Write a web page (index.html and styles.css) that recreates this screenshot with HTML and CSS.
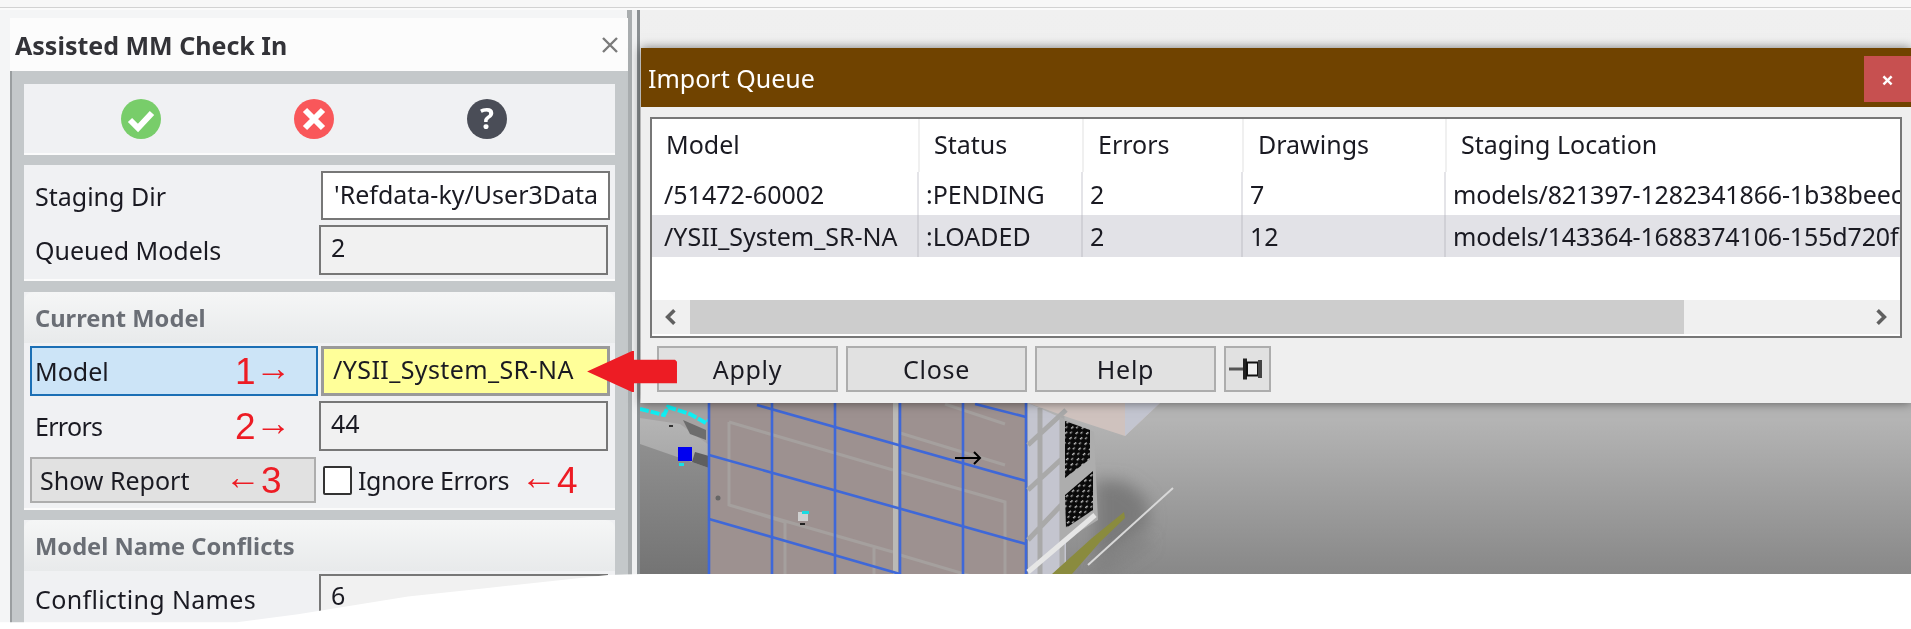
FILE: index.html
```html
<!DOCTYPE html>
<html lang="en">
<head>
<meta charset="utf-8">
<title>Assisted MM Check In</title>
<link rel="stylesheet" href="styles.css">
</head>
<body>
<div class="screen">
  <div class="topbar"></div>
  <div class="workspace">
    <aside class="panel">
      <div class="panel-inner">
        <header class="panel-title">
          <span>Assisted MM Check In</span>
          <svg class="panel-close" viewBox="0 0 20 20"><path d="M3 3 17 17M17 3 3 17"/></svg>
        </header>
        <div class="panel-body">
          <div class="group toolbar">
            <svg class="round-icon" viewBox="0 0 40 40"><circle cx="20" cy="20" r="20" fill="#78cd6a"/><path d="M9 21l8 8 14-15" fill="none" stroke="#fff" stroke-width="6"/></svg>
            <svg class="round-icon" viewBox="0 0 40 40"><circle cx="20" cy="20" r="20" fill="#f9575a"/><path d="M11 11 29 29M29 11 11 29" fill="none" stroke="#fff" stroke-width="6"/></svg>
            <svg class="round-icon" viewBox="0 0 40 40"><circle cx="20" cy="20" r="20" fill="#4a4d57"/><text x="20" y="30" class="help-glyph">?</text></svg>
          </div>
          <section class="group fields">
            <div class="row">
              <div class="label">Staging Dir</div>
              <div class="field field-edit">'Refdata-ky/User3Data</div>
            </div>
            <div class="row row-gap">
              <div class="label">Queued Models</div>
              <div class="field field-read">2</div>
            </div>
          </section>
          <section class="group">
            <h2 class="group-head">Current Model</h2>
            <div class="group-rows">
              <div class="row row-first">
                <div class="label label-focus">Model<span class="mark mark-1"><b>1</b><i>→</i></span></div>
                <div class="field field-hot">/YSII_System_SR-NA</div>
              </div>
              <div class="row row-gap">
                <div class="label label-tight">Errors<span class="mark mark-2"><b>2</b><i>→</i></span></div>
                <div class="field field-read">44</div>
              </div>
              <div class="row row-actions">
                <button class="report">Show Report<span class="mark mark-3"><i>←</i><b>3</b></span></button>
                <label class="check"><span class="box"></span><span>Ignore Errors</span><span class="mark mark-4"><i>←</i><b>4</b></span></label>
              </div>
            </div>
          </section>
          <section class="group">
            <h2 class="group-head">Model Name Conflicts</h2>
            <div class="group-rows">
              <div class="row">
                <div class="label label-wide">Conflicting Names</div>
                <div class="field field-read">6</div>
              </div>
            </div>
          </section>
        </div>
      </div>
    </aside>

    <main class="viewport">
      <svg class="model" viewBox="640 403 1271 171" preserveAspectRatio="none">
        <defs>
          <linearGradient id="lowGrey" x1="0" y1="0" x2="0" y2="1"><stop offset="0" stop-color="#8f8f8f"/><stop offset="1" stop-color="#747474"/></linearGradient>
          <pattern id="speck" width="8" height="7" patternUnits="userSpaceOnUse" patternTransform="rotate(-40)">
            <rect width="8" height="7" fill="#0a0a0a"/><rect x="1" y="1" width="3" height="1.4" fill="#c4c4c4"/><rect x="5" y="4" width="2.5" height="1.4" fill="#a8a8a8"/>
          </pattern>
          <filter id="soft" x="-50%" y="-50%" width="200%" height="200%"><feGaussianBlur stdDeviation="8"/></filter>
        </defs>
        <!-- ground and shadows -->
        <polygon points="640,444 709,468 709,574 640,574" fill="url(#lowGrey)"/>
        <polygon points="1095,480 1125,482 1146,498 1150,525 1125,545 1095,565" fill="#7a7a7a" filter="url(#soft)"/>
        <path d="M1095 574 1148 540" stroke="#7c7c7c" stroke-width="8" filter="url(#soft)"/>
        <!-- left debris -->
        <polygon points="640,403 709,403 709,445 680,424 640,418" fill="#a5a3a3"/>
        <polygon points="683,420 706,430 706,440 690,434" fill="#6d6d6d"/>
        <polygon points="695,452 709,456 709,468 692,462" fill="#5f5f5f"/>
        <polyline points="640,409 664,415 668,407 690,414 706,423 722,409" fill="none" stroke="#0ff0f4" stroke-width="4" stroke-dasharray="9 2"/>
        <rect x="669" y="425" width="4" height="2" fill="#333"/>
        <rect x="678" y="447" width="14" height="14" fill="#0000f0"/>
        <rect x="679" y="463" width="5" height="3" fill="#18e0e8"/>
        <!-- wall -->
        <rect x="709" y="403" width="317" height="171" fill="#9d9190"/>
        <g class="wall-trim">
          <path d="M729 422V505L785 522V574M729 422 893 470M729 505 893 552M900 472 1005 502V574M900 433 1005 465M900 555 1005 586M945 404 1005 424M874 548V574"/>
        </g>
        <rect x="893" y="403" width="5" height="171" fill="#bbbab6"/>
        <g class="wall-grid">
          <path d="M709 403V574M772 403V574M835 403V574M900 403V574M963 403V574M1026 403V574"/>
          <path d="M709 455 1026 544M709 519 900 574M757 405 1026 481M975 404 1026 417"/>
        </g>
        <circle cx="718" cy="498" r="2.5" fill="#666"/>
        <rect x="798" y="512" width="10" height="9" fill="#cfcfcf"/>
        <rect x="802" y="511" width="7" height="3" fill="#19dbe2"/>
        <rect x="800" y="523" width="5" height="2" fill="#222"/>
        <path class="small-arrow" d="M955 458H979M974 452 980 458 974 464"/>
        <!-- right-hand structure -->
        <polygon points="1028,403 1160,403 1125,436 1070,418" fill="#cfc2be"/>
        <polygon points="1125,403 1160,403 1125,436" fill="#c3c5d0"/>
        <polygon points="1028,403 1066,420 1066,574 1028,574" fill="#c4c5cf"/>
        <path d="M1028 445 1066 410M1028 490 1066 455M1028 540 1066 500M1040 408V574M1062 416V574" fill="none" stroke="#a9a9a9" stroke-width="5"/>
        <polygon points="1060,417 1094,432 1098,520 1066,540 1060,540" fill="#adadad"/>
        <polygon points="1065,421 1090,430 1090,459 1065,478" fill="url(#speck)"/>
        <polygon points="1065,495 1093,471 1093,510 1066,528" fill="url(#speck)"/>
        <path d="M1028 572 1095 515" stroke="#e6e6e6" stroke-width="5"/>
        <polygon points="1052,574 1072,574 1100,542 1125,518 1124,512 1092,538" fill="#8a8b3e"/>
        <path d="M1088 565 1173 488" stroke="#d8d8d8" stroke-width="2"/>
      </svg>

      <section class="dialog">
        <header class="dialog-title">
          <span>Import Queue</span>
          <button class="dialog-close">×</button>
        </header>
        <div class="list">
          <div class="list-row list-head">
            <div>Model</div><div>Status</div><div>Errors</div><div>Drawings</div><div>Staging Location</div>
          </div>
          <div class="list-row list-item">
            <div>/51472-60002</div><div>:PENDING</div><div>2</div><div>7</div><div>models/821397-1282341866-1b38beecd</div>
          </div>
          <div class="list-row list-item list-selected">
            <div>/YSII_System_SR-NA</div><div>:LOADED</div><div>2</div><div>12</div><div>models/143364-1688374106-155d720fd</div>
          </div>
          <div class="list-fill"></div>
          <div class="scrollbar">
            <div class="scroll-btn"><svg viewBox="0 0 16 16"><path d="M11 2 5 8l6 6"/></svg></div>
            <div class="scroll-thumb"></div>
            <div class="scroll-rest"></div>
            <div class="scroll-btn"><svg viewBox="0 0 16 16"><path d="M5 2l6 6-6 6"/></svg></div>
          </div>
        </div>
        <div class="dialog-actions">
          <button class="dlg-btn">Apply</button>
          <button class="dlg-btn">Close</button>
          <button class="dlg-btn">Help</button>
          <button class="dlg-btn pin">
            <svg viewBox="0 0 38 24"><path d="M0 12H15" stroke="#555" stroke-width="3"/><rect x="14" y="1.5" width="4" height="21" fill="#222"/><rect x="18" y="5.5" width="11" height="13" fill="#eee" stroke="#111" stroke-width="2"/><rect x="29" y="3" width="4" height="18" fill="#444"/></svg>
          </button>
        </div>
      </section>
    </main>
  </div>

  <svg class="red-arrow" viewBox="0 0 94 44"><polygon points="0,21 46,0 48,0 48,9 90,9 92,11 92,33 48,33 48,42 46,42"/></svg>
  <svg class="torn" viewBox="0 0 641 56" preserveAspectRatio="none"><polygon points="641,0 608,1 490,14 408,23 298,41 237,49 0,49 0,56 641,56"/></svg>
</div>
</body>
</html>
```
FILE: styles.css
```css
* { box-sizing: border-box; }
html, body { margin: 0; height: 100%; background: #fff; overflow: hidden; }
body { font-family: "Noto Sans", "Open Sans", sans-serif; color: #1a1a22; }

.screen { position: relative; width: 1911px; height: 629px; filter: blur(0.45px); overflow: hidden; }
.topbar { height: 10px; background: #f7f7f7; box-shadow: inset 0 -2px 0 #fafafa, inset 0 -3px 0 #d2d2d2; }
.workspace { display: flex; align-items: flex-start; }

/* left panel */
.panel { flex: none; width: 640px; height: 619px; padding: 8px 2px 0 10px; background: linear-gradient(90deg, #f4f5f6 0, #f4f5f6 627px, #a9adaf 627px, #a9adaf 632px, #eff0f1 632px, #eff0f1 637px, #8a8f92 637px); }
.panel-inner { width: 618px; }
.panel-title { height: 53px; padding: 0 8px 0 5px; background: #fcfcfc; display: flex; align-items: center; justify-content: space-between; font-size: 25px; font-weight: 700; color: #333338; }
.panel-close { width: 20px; height: 20px; fill: none; stroke: #7b7b7b; stroke-width: 2.4; }
.panel-body { background: #c4c8ca; border-left: 2px solid #9a9ea0; padding: 13px 13px 0 12px; display: flex; flex-direction: column; gap: 12px; }
.group { background: #f0f1f3; box-shadow: 0 2px 0 #fbfbfb; }
.toolbar { height: 69px; display: flex; align-items: center; gap: 133px; padding-left: 97px; }
.round-icon { width: 40px; height: 40px; }
.help-glyph { font: 700 29px "Noto Sans", sans-serif; fill: #fff; text-anchor: middle; }

.fields { height: 114px; padding: 6px 5px 0 6px; margin-bottom: 1px; }
.group-head { margin: 0; height: 51px; padding: 0 0 0 11px; display: flex; align-items: center; font-size: 23.7px; font-weight: 700; color: #6a6e75; background: linear-gradient(#f5f6f6, #e8eaeb); border-radius: 9px 9px 0 0; }
.group-rows { padding: 3px 5px 5px 6px; display: flex; flex-direction: column; }
.row { display: flex; align-items: stretch; height: 49px; font-size: 25px; }
.row-gap { margin-top: 5px; height: 50px; }
.row-first { height: 50px; }
.row-actions { margin-top: 6px; height: 46px; }
.label { flex: none; width: 289px; padding-left: 5px; display: flex; align-items: center; position: relative; }
.label-wide { letter-spacing: .35px; }
.label-tight { letter-spacing: -.7px; }
.label-focus { background: #cce4f7; border: 2px solid #1b6fb5; padding-left: 3px; width: 288px; margin-right: 1px; }
.field { flex: none; width: 289px; padding: 0 0 4px 10px; display: flex; align-items: center; border: 2px solid #777; white-space: nowrap; overflow: hidden; }
.field-edit { margin-left: 2px; background: #fff; padding-left: 11px; }
.field-read { background: #f1f1f1; padding-bottom: 7px; }
.field-hot { margin-left: 2px; background: #ffff99; border: 3px solid #9a9a9a; padding-left: 9px; letter-spacing: .4px; }

.report { flex: none; width: 286px; margin-right: 3px; padding: 0 0 0 8px; display: flex; align-items: center; font: inherit; color: inherit; background: #e1e1e1; border: 2px solid #adadad; position: relative; }
.check { flex: 1; display: flex; align-items: center; gap: 6px; padding-left: 4px; position: relative; letter-spacing: -.4px; }
.box { width: 29px; height: 29px; background: #fff; border: 2px solid #333; border-radius: 2px; }

/* red annotations */
.mark { position: absolute; top: 50%; transform: translateY(-50%); display: flex; align-items: center; color: #ed1c24; font-family: "Liberation Sans", sans-serif; letter-spacing: 0; }
.mark b { font-weight: 400; font-size: 37px; line-height: 1; }
.mark i { font-style: normal; font-size: 36px; line-height: 1; transform: translateY(-4px); }
.mark-1 { left: 203px; }
.mark-2 { left: 205px; }
.mark-3 { left: 193px; }
.mark-4 { left: 202px; }

/* viewport */
.viewport { position: relative; flex: 1; height: 564px; background: linear-gradient(#f0f0f0 0, #ececec 393px, #b4b4b4 393px, #b4b4b4 410px, #888 564px); }
.model { position: absolute; left: 0; bottom: 0; width: 1271px; height: 171px; }
.wall-trim path { fill: none; stroke: #a5a09e; stroke-width: 3; }
.wall-grid path { fill: none; stroke: #3f68d8; stroke-width: 2.6; }
.small-arrow { fill: none; stroke: #000; stroke-width: 2; }

/* dialog */
.dialog { position: absolute; left: 1px; right: 0; top: 38px; height: 355px; background: #efefef; box-shadow: 0 0 10px rgba(0,0,0,.5); }
.dialog-title { position: relative; height: 59px; padding: 0 0 0 7px; display: flex; align-items: center; background: #704300; color: #fff; font-size: 25px; }
.dialog-close { position: absolute; right: 0; top: 8px; width: 47px; height: 46px; border: 0; padding: 0; background: #c75050; color: #fff; font: 700 22px "Noto Sans", sans-serif; }
.list { margin: 10px 9px 0; height: 221px; display: flex; flex-direction: column; background: #fff; border: 2px solid #777; overflow: hidden; font-size: 25px; }
.list-row { flex: none; display: grid; grid-template-columns: 268px 164px 160px 203px 1fr; white-space: nowrap; }
.list-row > div { display: flex; align-items: center; overflow: hidden; }
.list-head { height: 53px; }
.list-head > div { padding: 0 0 4px 14px; border-right: 2px solid #f0f0f0; }
.list-item { height: 43px; grid-template-columns: 267px 164px 160px 203px 1fr; }
.list-item > div { padding-left: 7px; border-right: 2px solid #e4e4e8; }
.list-item > div:first-child { padding-left: 12px; }
.list-item > div:last-child { letter-spacing: -.15px; }
.list-item > div:last-child, .list-head > div:last-child { border-right: 0; }
.list-selected { background: #e2e2e7; height: 42px; }
.list-selected > div { border-right-color: #d0d0d6; }
.list-fill { flex: 1; }
.scrollbar { flex: none; height: 34px; margin-bottom: 2px; display: flex; background: #f0f0f0; }
.scroll-btn { flex: none; width: 38px; display: flex; align-items: center; justify-content: center; }
.scroll-btn svg { width: 18px; height: 18px; fill: none; stroke: #606060; stroke-width: 3.2; }
.scroll-thumb { flex: none; width: 994px; background: #cdcdcd; }
.scroll-rest { flex: 1; }
.dialog-actions { margin-top: 8px; padding-left: 16px; display: flex; gap: 8px; }
.dlg-btn { width: 181px; height: 46px; padding: 0; background: #e1e1e1; border: 2px solid #adadad; font: inherit; font-size: 25px; letter-spacing: .7px; color: inherit; }
.pin { width: 47px; display: flex; align-items: center; justify-content: center; }
.pin svg { width: 38px; height: 24px; }

/* overlays */
.red-arrow { position: absolute; left: 587px; top: 351px; width: 92px; height: 43px; fill: #ed1c24; }
.torn { position: absolute; left: 0; top: 574px; width: 641px; height: 55px; fill: #fff; }
```
